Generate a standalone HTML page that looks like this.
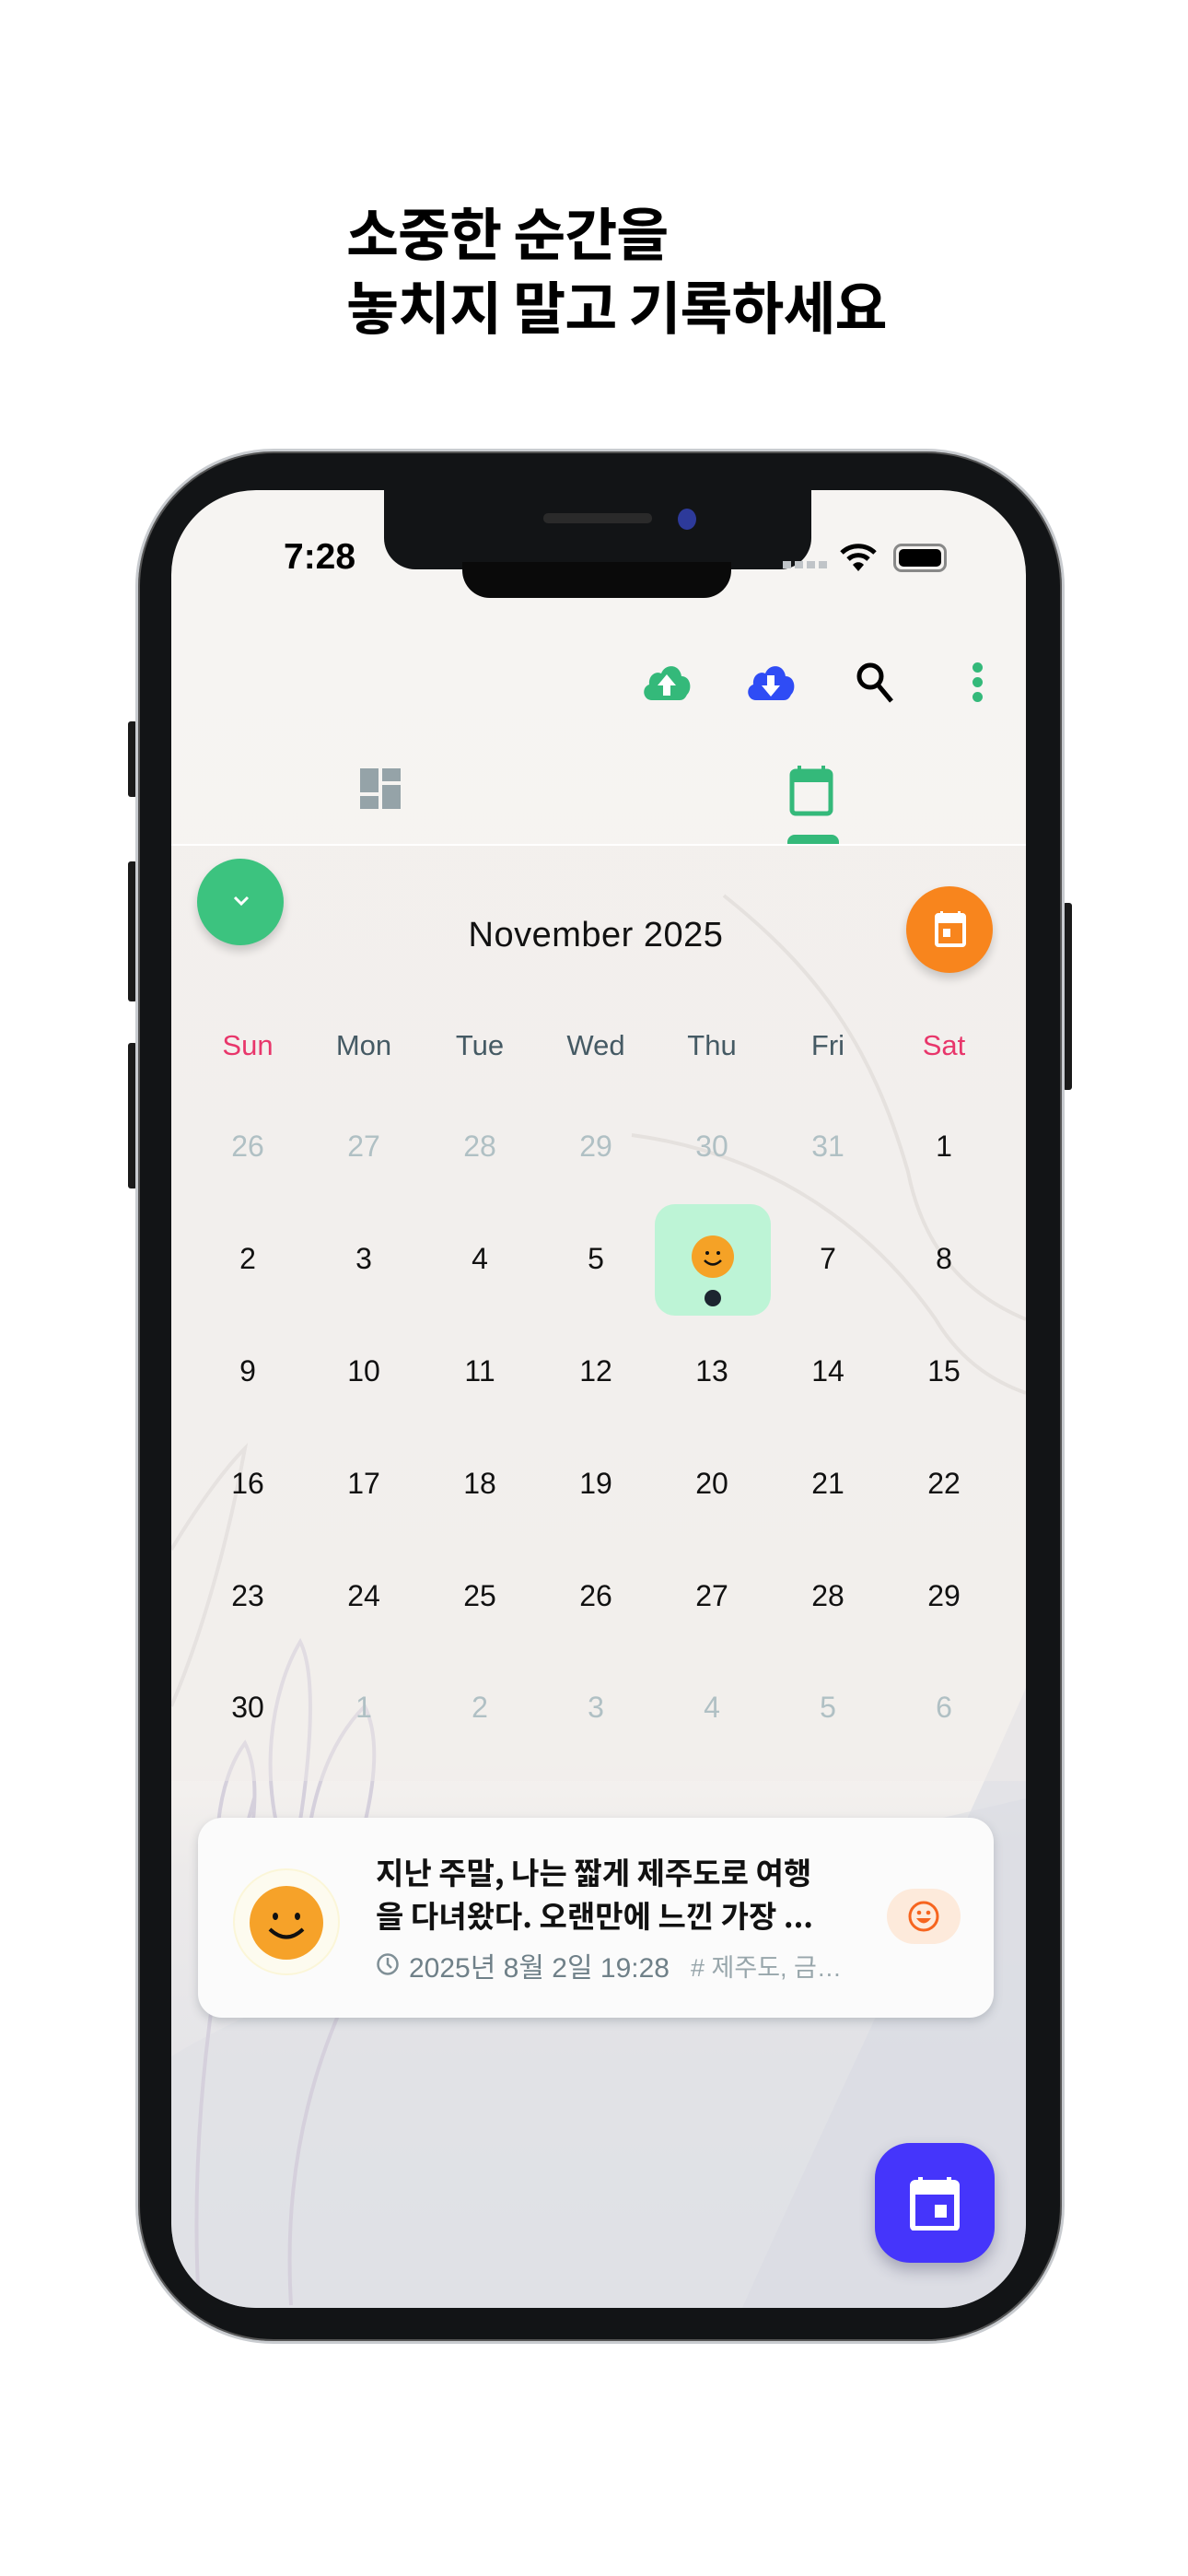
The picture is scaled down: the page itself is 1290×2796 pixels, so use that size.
<!DOCTYPE html>
<html><head><meta charset="utf-8">
<style>
*{margin:0;padding:0;box-sizing:border-box}
body{width:1290px;height:2796px;background:#fff;position:relative;overflow:hidden;font-family:"Liberation Sans","Noto Sans CJK KR",sans-serif}
.abs{position:absolute}
.h{left:376px;top:210px;font-family:"Noto Sans CJK KR",sans-serif;font-weight:700;font-size:62px;line-height:80px;color:#000;letter-spacing:-1px}
.phone{left:147px;top:487px;width:1009px;height:2057px;border-radius:150px;background:#121416;border:3px solid #c9ccd0;box-shadow:0 0 0 2px #555 inset}
.btn{background:#1a1a1a;border-radius:3px}
.screen{left:186px;top:532px;width:928px;height:1973px;border-radius:92px;overflow:hidden;background:linear-gradient(180deg,#f6f4f2 0%,#f5f2ef 70%,#eceaea 76%,#e4e4e8 88%,#dfe1e6 100%)}
.day{position:absolute;width:126px;text-align:center;font-size:32px;color:#111;transform:translateX(-63px)}
.wd{position:absolute;width:126px;text-align:center;font-size:31px;color:#455a64;transform:translateX(-63px)}
.mute{color:#b0c0c4}
</style></head><body>
<div class="abs h">소중한 순간을<br>놓치지 말고 기록하세요</div>

<div class="abs btn" style="left:139px;top:783px;width:10px;height:82px"></div>
<div class="abs btn" style="left:139px;top:935px;width:10px;height:152px"></div>
<div class="abs btn" style="left:139px;top:1132px;width:10px;height:158px"></div>
<div class="abs btn" style="left:1154px;top:980px;width:10px;height:203px"></div>
<div class="abs phone"></div>

<div class="abs screen">
 <svg class="abs" style="left:0;top:0" width="928" height="1973" viewBox="0 0 928 1973">
  <path d="M0 1700 C200 1580 500 1520 928 1420 L928 1973 L0 1973Z" fill="#dfe1e6" opacity=".7"/>
  <path d="M620 1973 C720 1750 840 1500 928 1300 L928 1973Z" fill="#d8dbe3" opacity=".6"/>
  <path d="M600 440 C700 520 760 600 800 740 C820 840 880 880 928 900" stroke="#dcd9d6" stroke-width="4" fill="none"/>
  <path d="M500 700 C650 720 760 800 830 900 C860 950 900 970 928 980" stroke="#dcd9d6" stroke-width="4" fill="none"/>
  <path d="M0 1150 C30 1100 60 1060 80 1040 C60 1150 30 1250 0 1320" stroke="#dedbd9" stroke-width="4" fill="none"/>
  <path d="M130 1500 C90 1400 110 1300 140 1250 C160 1290 150 1400 130 1500" stroke="#d5d0dc" stroke-width="4" fill="none"/>
  <path d="M150 1620 C130 1470 160 1370 210 1320 C240 1380 200 1500 150 1620" stroke="#d5d0dc" stroke-width="4" fill="none"/>
  <path d="M60 1560 C40 1480 50 1400 80 1360 C100 1400 90 1480 60 1560" stroke="#d5d0dc" stroke-width="4" fill="none"/>
  <path d="M130 1970 C120 1800 160 1650 280 1480" stroke="#d5d0dc" stroke-width="4" fill="none"/>
  <path d="M30 1970 C20 1800 40 1600 90 1420" stroke="#d5d0dc" stroke-width="4" fill="none"/>
 </svg>
 <div class="abs" style="left:0;top:385px;width:928px;height:1016px;background:rgba(240,236,232,.45)"></div>
 <div class="abs" style="left:0;top:384px;width:928px;height:2px;background:#ffffff"></div>
</div>

<div class="abs" style="left:417px;top:526px;width:464px;height:92px;background:#121416;border-radius:0 0 34px 34px"></div>
<div class="abs" style="left:502px;top:610px;width:292px;height:39px;background:#0a0a0a;border-radius:0 0 30px 30px"></div>
<div class="abs" style="left:590px;top:557px;width:118px;height:11px;background:#2a2a2a;border-radius:5px"></div>
<div class="abs" style="left:736px;top:552px;width:20px;height:23px;background:#2d3a9a;border-radius:50%"></div>

<div class="abs" style="left:308px;top:583px;font-size:39px;font-weight:700;color:#000">7:28</div>
<div class="abs" style="left:850px;top:609px;width:50px;height:8px;background:repeating-linear-gradient(90deg,#c0c4c8 0 9px,transparent 9px 13px)"></div>
<svg class="abs" style="left:912px;top:588px" width="40" height="34" viewBox="0 0 40 34"><path d="M2 12 A26 26 0 0 1 38 12" stroke="#000" stroke-width="5" fill="none"/><path d="M9 19 A16 16 0 0 1 31 19" stroke="#000" stroke-width="5" fill="none"/><path d="M14 25 L20 32 L26 25 A8 8 0 0 0 14 25Z" fill="#000"/></svg>
<div class="abs" style="left:970px;top:590px;width:58px;height:31px;border:3px solid #888;border-radius:9px;padding:3px"><div style="width:100%;height:100%;background:#000;border-radius:5px"></div></div>

<svg class="abs" style="left:696px;top:718px" width="56" height="44" viewBox="0 0 56 44"><path d="M12 42 C2 42 0 28 9 25 C8 15 16 10 22 13 C26 2 42 2 44 16 C54 16 56 30 50 36 C48 40 46 42 42 42Z" fill="#34b97a"/><path d="M28 14 L38 26 H32 V37 H24 V26 H18Z" fill="#fff"/></svg>
<svg class="abs" style="left:809px;top:718px" width="56" height="44" viewBox="0 0 56 44"><path d="M12 42 C2 42 0 28 9 25 C8 15 16 10 22 13 C26 2 42 2 44 16 C54 16 56 30 50 36 C48 40 46 42 42 42Z" fill="#2f4cf5"/><path d="M28 38 L38 26 H32 V15 H24 V26 H18Z" fill="#fff"/></svg>
<svg class="abs" style="left:928px;top:717px" width="44" height="48" viewBox="0 0 44 48"><circle cx="17" cy="17" r="12" stroke="#000" stroke-width="5" fill="none"/><path d="M25 26 L40 44" stroke="#000" stroke-width="5"/></svg>
<div class="abs" style="left:1056px;top:719px;width:11px;height:11px;border-radius:50%;background:#34b97a;box-shadow:0 16px 0 #34b97a,0 32px 0 #34b97a"></div>

<svg class="abs" style="left:391px;top:834px" width="46" height="46" viewBox="0 0 46 46" fill="#95a3a8"><rect x="0" y="0" width="20" height="26"/><rect x="24" y="0" width="20" height="14"/><rect x="0" y="30" width="20" height="14"/><rect x="24" y="18" width="20" height="26"/></svg>
<svg class="abs" style="left:857px;top:831px" width="48" height="56" viewBox="0 0 48 56"><rect x="9" y="0" width="4" height="8" fill="#34b97a"/><rect x="35" y="0" width="4" height="8" fill="#34b97a"/><rect x="3" y="6" width="42" height="46" rx="4" fill="none" stroke="#34b97a" stroke-width="5"/><rect x="3" y="6" width="42" height="12" fill="#34b97a"/></svg>
<div class="abs" style="left:855px;top:906px;width:56px;height:10px;background:#34b97a;border-radius:8px 8px 0 0"></div>

<div class="abs" style="left:214px;top:932px;width:94px;height:94px;border-radius:50%;background:#3cc37f;box-shadow:0 6px 10px rgba(0,0,0,.18)"></div>
<svg class="abs" style="left:253px;top:972px" width="18" height="12" viewBox="0 0 18 12"><path d="M2 2 L9 9 L16 2" stroke="#fff" stroke-width="3" fill="none"/></svg>
<div class="abs" style="left:984px;top:962px;width:94px;height:94px;border-radius:50%;background:#f8851d;box-shadow:0 6px 10px rgba(0,0,0,.18)"></div>
<svg class="abs" style="left:1015px;top:989px" width="34" height="40" viewBox="0 0 34 40"><rect x="6" y="0" width="3" height="6" fill="#fff"/><rect x="25" y="0" width="3" height="6" fill="#fff"/><rect x="2" y="4" width="30" height="33" rx="2" fill="none" stroke="#fff" stroke-width="4"/><rect x="2" y="4" width="30" height="9" fill="#fff"/><rect x="9" y="19" width="8" height="9" fill="#fff"/></svg>

<div class="abs" style="left:447px;top:994px;width:400px;text-align:center;font-size:38px;color:#111;letter-spacing:0.5px">November 2025</div>

<div class="wd" style="left:269px;top:1117px;color:#e8366b">Sun</div>
<div class="wd" style="left:395px;top:1117px">Mon</div>
<div class="wd" style="left:521px;top:1117px">Tue</div>
<div class="wd" style="left:647px;top:1117px">Wed</div>
<div class="wd" style="left:773px;top:1117px">Thu</div>
<div class="wd" style="left:899px;top:1117px">Fri</div>
<div class="wd" style="left:1025px;top:1117px;color:#e8366b">Sat</div>

<div class="abs" style="left:711px;top:1307px;width:126px;height:121px;border-radius:22px;background:#bdf4d6"></div>
<div class="abs" style="left:751px;top:1341px;width:46px;height:46px;border-radius:50%;background:#f5a226"></div>
<svg class="abs" style="left:751px;top:1341px" width="46" height="46" viewBox="0 0 46 46"><circle cx="17" cy="19" r="2" fill="#111"/><circle cx="29" cy="19" r="2" fill="#111"/><path d="M14 27 Q23 36 32 27" stroke="#111" stroke-width="2.5" fill="none"/></svg>
<div class="abs" style="left:765px;top:1400px;width:18px;height:18px;border-radius:50%;background:#1c2530"></div>

<div id="days"></div>
<script>
(function(){
var cx=[269,395,521,647,773,899,1025],ry=[1226,1348,1470,1592,1714,1835];
var rows=[["26","27","28","29","30","31","1"],["2","3","4","5","","7","8"],["9","10","11","12","13","14","15"],["16","17","18","19","20","21","22"],["23","24","25","26","27","28","29"],["30","1","2","3","4","5","6"]];
var h="";
for(var r=0;r<6;r++)for(var c=0;c<7;c++){var t=rows[r][c];if(!t)continue;var m=(r==0&&c<6)||(r==5&&c>0);h+='<div class="day'+(m?' mute':'')+'" style="left:'+cx[c]+'px;top:'+ry[r]+'px">'+t+'</div>';}
document.getElementById('days').innerHTML=h;})();
</script>

<div class="abs" style="left:215px;top:1973px;width:864px;height:217px;border-radius:26px;background:#fbfbfb;box-shadow:0 4px 10px rgba(100,110,120,.3)"></div>
<div class="abs" style="left:253px;top:2028px;width:116px;height:116px;border-radius:50%;background:#fdfbef;border:2px solid #fbf6d8"></div>
<div class="abs" style="left:271px;top:2047px;width:80px;height:80px;border-radius:50%;background:#f6a229"></div>
<svg class="abs" style="left:271px;top:2047px" width="80" height="80" viewBox="0 0 80 80"><ellipse cx="28" cy="33" rx="3" ry="4" fill="#111"/><ellipse cx="52" cy="33" rx="3" ry="4" fill="#111"/><path d="M22 47 Q40 64 58 47" stroke="#111" stroke-width="4" fill="none"/></svg>
<div class="abs" style="left:408px;top:2008px;font-family:'Noto Sans CJK KR',sans-serif;font-weight:700;font-size:33px;line-height:47px;color:#111;width:540px;white-space:nowrap">지난 주말, 나는 짧게 제주도로 여행<br>을 다녀왔다. 오랜만에 느낀 가장 ...</div>
<svg class="abs" style="left:408px;top:2119px" width="26" height="26" viewBox="0 0 26 26"><circle cx="13" cy="13" r="10.5" stroke="#7f8f96" stroke-width="2.5" fill="none"/><path d="M13 6 V13 L17 17" stroke="#7f8f96" stroke-width="2.5" fill="none"/></svg>
<div class="abs" style="left:444px;top:2111px;font-family:'Liberation Sans','Noto Sans CJK KR',sans-serif;font-size:30px;color:#6f8088;white-space:nowrap">2025년 8월 2일 19:28</div>
<div class="abs" style="left:750px;top:2114px;font-family:'Liberation Sans','Noto Sans CJK KR',sans-serif;font-size:27px;color:#98a6ab;white-space:nowrap"># 제주도, 금…</div>
<div class="abs" style="left:963px;top:2050px;width:80px;height:60px;border-radius:30px;background:#fdeadb"></div>
<svg class="abs" style="left:985px;top:2062px" width="36" height="36" viewBox="0 0 36 36"><circle cx="18" cy="18" r="15" stroke="#f6651f" stroke-width="3" fill="none"/><circle cx="13" cy="14" r="2.3" fill="#f6651f"/><circle cx="23" cy="14" r="2.3" fill="#f6651f"/><path d="M10 20 H26 Q18 31 10 20Z" fill="#f6651f"/></svg>

<div class="abs" style="left:950px;top:2326px;width:130px;height:130px;border-radius:38px;background:#4535fb;box-shadow:0 8px 16px rgba(40,40,80,.3)"></div>
<svg class="abs" style="left:988px;top:2363px" width="54" height="58" viewBox="0 0 54 58"><rect x="9" y="0" width="5" height="9" fill="#fff"/><rect x="40" y="0" width="5" height="9" fill="#fff"/><rect x="3" y="6" width="48" height="50" rx="3" fill="none" stroke="#fff" stroke-width="6"/><rect x="3" y="6" width="48" height="13" fill="#fff"/><rect x="27" y="30" width="13" height="14" fill="#fff"/></svg>
</body></html>
